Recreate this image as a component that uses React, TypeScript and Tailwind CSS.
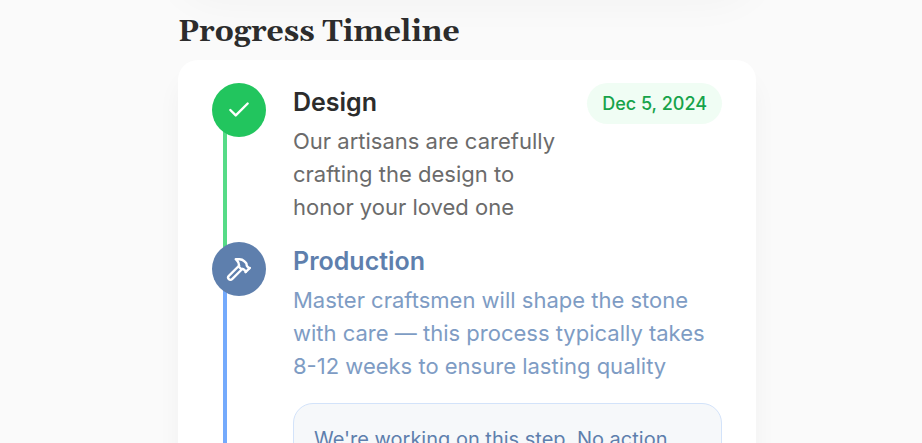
import * as React from 'react';
import { Check, Hammer, LucideIcon } from 'lucide-react';
import clsx from 'clsx';

interface TimelineStep {
  id: string;
  title: string;
  description: string;
  status: 'done' | 'current';
  icon: LucideIcon;
  date?: string;
  note?: string;
}

const steps: TimelineStep[] = [
  {
    id: 'design',
    title: 'Design',
    description: 'Our artisans are carefully crafting the design to honor your loved one',
    status: 'done',
    icon: Check,
    date: 'Dec 5, 2024',
  },
  {
    id: 'production',
    title: 'Production',
    description:
      'Master craftsmen will shape the stone with care — this process typically takes 8-12 weeks to ensure lasting quality',
    status: 'current',
    icon: Hammer,
    note: "We're working on this step. No action",
  },
];

const StepItem: React.FC<{ step: TimelineStep }> = ({ step }) => {
  const Icon = step.icon;
  const isDone = step.status === 'done';

  return (
    <li className="flex gap-[27px]">
      {/* Marker and connector */}
      <div className="flex w-[54px] shrink-0 flex-col">
        <div
          className={clsx(
            'relative z-10 flex h-[54px] items-center justify-center rounded-full text-white',
            isDone ? 'bg-[#22c55e]' : 'bg-[#5e7fad]'
          )}
        >
          <Icon size={26} strokeWidth={2.2} />
        </div>
        <div
          className={clsx(
            '-my-3 ml-[11px] w-1 grow',
            isDone ? 'bg-[#56db87]' : 'bg-[#74aafc]'
          )}
        />
      </div>

      <div className="min-w-0 grow pb-[18px]">
        <div className="flex items-start justify-between gap-4">
          <div>
            <h3
              className={clsx(
                'mb-1 text-[25px] leading-[38px] font-semibold',
                isDone ? 'text-[#2c2c2c]' : 'text-[#5e7fad]'
              )}
            >
              {step.title}
            </h3>
            <p
              className={clsx(
                'text-[22px] leading-[33px]',
                isDone ? 'text-[#6b6b6b]' : 'text-[#7e9cc4]'
              )}
            >
              {step.description}
            </p>
          </div>
          {step.date && (
            <span className="shrink-0 rounded-full bg-[#f0fdf4] px-[15px] py-[6px] text-[18px] leading-[29px] font-medium text-[#16a34a]">
              {step.date}
            </span>
          )}
        </div>

        {step.note && (
          <div className="mt-5 rounded-[20px] border border-[#d3e3fa] bg-[#f6f8fa] p-5">
            <p className="text-[20px] leading-[30px] text-[#5e7fad]">{step.note}</p>
          </div>
        )}
      </div>
    </li>
  );
};

export default function App() {
  return (
    <main className="h-screen overflow-hidden bg-[#fafafa] pl-3 font-['Inter',sans-serif]">
      <div className="mx-auto w-full max-w-[578px]">
        {/* Bottom edge of the card above, only its shadow is in view */}
        <div className="-mt-24 h-20 rounded-[40px] bg-white shadow-[0_16px_44px_rgba(40,60,50,0.04)]" />

        <section className="mt-4 pt-3">
          <h2 className="font-['Georgia','Gelasio','Liberation_Serif',serif] text-[30px] leading-[40px] font-bold text-[#2c2c2c]">
            Progress Timeline
          </h2>
          <div className="mt-2 rounded-[20px] bg-white px-[34px] pt-[23px] pb-8 shadow-[0_20px_24px_rgba(40,60,50,0.04)]">
            <ol>
              {steps.map((step) => (
                <StepItem key={step.id} step={step} />
              ))}
            </ol>
          </div>
        </section>
      </div>
    </main>
  );
}
